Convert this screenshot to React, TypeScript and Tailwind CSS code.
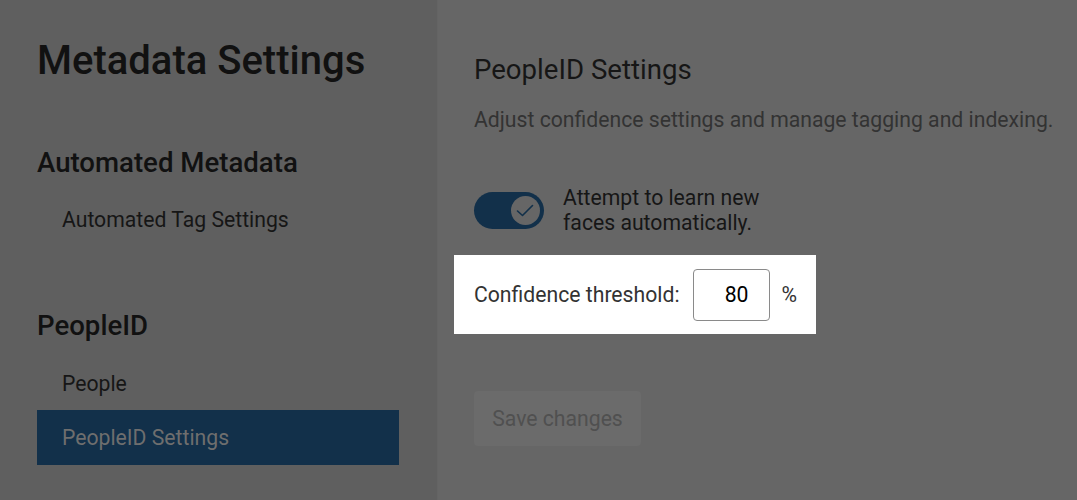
import React from "react";

export default function App() {
  return (
    <div className="flex h-[500px] w-full overflow-hidden font-['Roboto',sans-serif]">
      <aside className="w-[438px] shrink-0 border-r border-[#646464] bg-[#5f5f5f] pl-[37px] pt-[37px]">
        <h1 className="text-[40px] font-medium leading-[48px] text-[#111111]">Metadata Settings</h1>
        <h2 className="mt-[61px] text-[27.6px] font-medium leading-[34px] text-[#111111]">Automated Metadata</h2>
        <div className="mt-[26px] pl-[25px] text-[21.2px] leading-[28px] text-[#161616]">Automated Tag Settings</div>
        <h2 className="mt-[75px] text-[27.6px] font-medium leading-[34px] text-[#111111]">PeopleID</h2>
        <div className="mt-[27px] pl-[25px] text-[21.2px] leading-[28px] text-[#161616]">People</div>
        <div className="mt-[12px] flex h-[55px] w-[362px] items-center bg-[#12304a] pl-[25px] text-[21.2px] leading-[28px] text-[#6e6e6e]">
          PeopleID Settings
        </div>
      </aside>
      <main className="flex-1 bg-[#666666] pl-[36px] pt-[53px]">
        <h2 className="text-[27.6px] leading-[34px] text-[#161616]">PeopleID Settings</h2>
        <p className="mt-[19px] text-[21.2px] leading-[28px] text-[#333333]">
          Adjust confidence settings and manage tagging and indexing.
        </p>
        <div className="mt-[51px] flex items-center gap-[19px]">
          <div className="flex h-[37px] w-[70px] items-center justify-end rounded-full bg-[#12304a] pr-[4px]">
            <div className="flex h-[29px] w-[29px] items-center justify-center rounded-full bg-[#666666]">
              <svg width="29" height="29" viewBox="0 0 29 29" fill="none">
                <path d="M6.5 15 L11.5 19.5 L21.5 9.5" stroke="#12304a" strokeWidth="1.6" strokeLinecap="round" strokeLinejoin="round" />
              </svg>
            </div>
          </div>
          <div className="w-[230px] text-[21.2px] leading-[25px] text-[#161616]">
            Attempt to learn new faces automatically.
          </div>
        </div>
        <div className="-ml-[20px] mt-[20px] inline-flex h-[79px] items-center bg-white pl-[20px] pr-[19px]">
          <span className="text-[21.2px] leading-[28px] text-[#333333]">Confidence threshold:</span>
          <div className="ml-[13px] flex h-[52px] w-[77px] items-center justify-end rounded-[4px] border border-[#8a8a8a] pr-[20px] text-[21.2px] text-black">
            80
          </div>
          <span className="ml-[12px] text-[21.2px] leading-[28px] text-[#333333]">%</span>
        </div>
        <div className="mt-[57px]">
          <button className="flex h-[55px] w-[167px] items-center justify-center rounded-[4px] bg-[#6b6b6b] text-[21.2px] leading-[28px] text-[#505050]">
            Save changes
          </button>
        </div>
      </main>
    </div>
  );
}
